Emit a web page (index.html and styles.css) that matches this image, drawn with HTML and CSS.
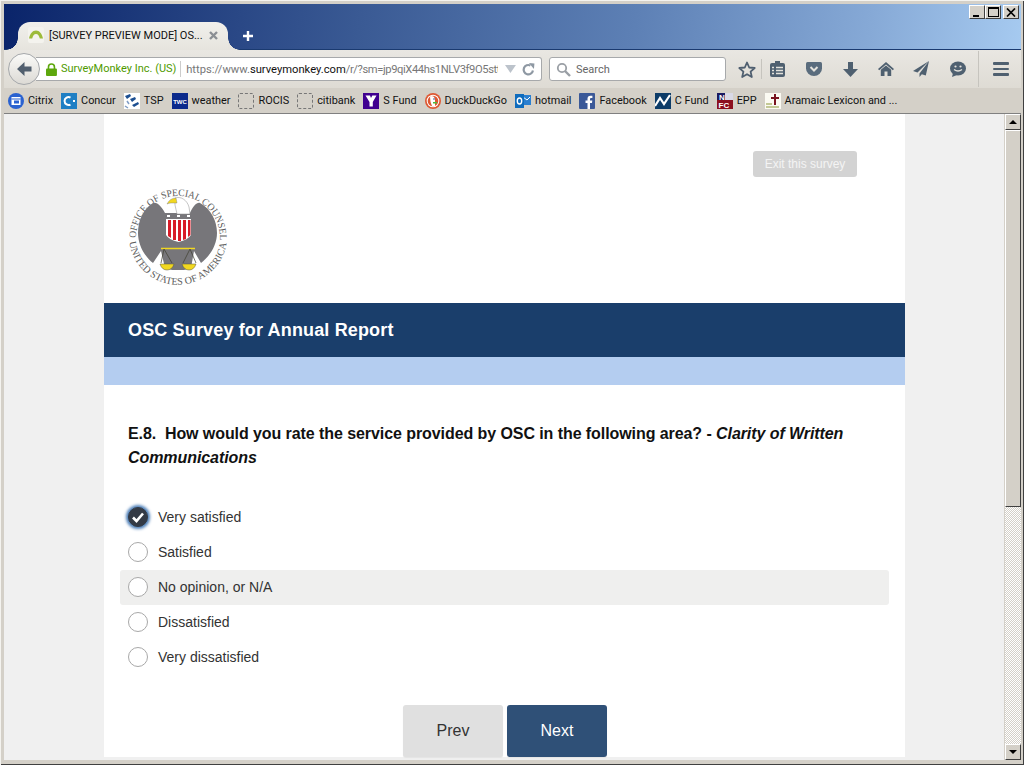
FILE: index.html
```html
<!DOCTYPE html>
<html lang="en">
<head>
    <meta charset="UTF-8">
    <meta name="viewport" content="width=device-width, initial-scale=1.0">
    <title>OSC Survey for Annual Report</title>
    <link rel="stylesheet" href="styles.css">
</head>
<body>
<div class="window">
    <div class="titlebar">
        <div class="tabs">
            <div class="tab">
                <svg class="tab-icon" width="16" height="16" viewBox="0 0 16 16"><rect width="16" height="16" rx="2" fill="#f4f3ee"/><path d="M1 11.500C2 6.500 4.500 3.500 8 3.500C11.500 3.500 14 6.500 15 11.500L11.800 11.500C11.200 8.800 10 7 8 7C6 7 4.800 8.800 4.200 11.500Z" fill="#9dbb3a"/></svg>
                <span class="tab-title">[SURVEY PREVIEW MODE] OS...</span>
                <svg class="tab-close" width="9" height="9" viewBox="0 0 9 9"><path d="M1 1L8 8M8 1L1 8" stroke="#8b8f94" stroke-width="2.400"/></svg>
            </div>
            <svg class="new-tab" width="12" height="12" viewBox="0 0 12 12"><path d="M6 1V11M1 6H11" stroke="#fff" stroke-width="2.400"/></svg>
        </div>
        <div class="win-buttons">
            <div class="win-btn"><span class="glyph-min"></span></div>
            <div class="win-btn"><span class="glyph-max"></span></div>
            <div class="win-btn close-btn">
                <svg width="10" height="9" viewBox="0 0 10 9"><path d="M1 0.500L9 8.500M9 0.500L1 8.500" stroke="#000" stroke-width="1.700"/></svg>
            </div>
        </div>
    </div>

    <div class="toolbar">
        <div class="back-btn">
            <svg width="16" height="16" viewBox="0 0 16 16"><path d="M8.500 1L1 8L8.500 15V10.500H15.500V5.500H8.500Z" fill="#515f6e"/></svg>
        </div>
        <div class="urlbar">
            <svg class="lock" width="11" height="13" viewBox="0 0 11 13"><path d="M2.500 6V4A3 3 0 0 1 8.500 4V6" fill="none" stroke="#5da70d" stroke-width="1.600"/><rect y="5.500" width="11" height="7.500" rx="1" fill="#5da70d"/></svg>
            <span class="identity">SurveyMonkey Inc. (US)</span>
            <span class="url"><span class="url-dim">https://www.</span>surveymonkey.com<span class="url-dim url-tail">/r/?sm=jp9qiX44hs1NLV3f9O5stt</span></span>
            <svg class="drop" width="11" height="8" viewBox="0 0 11 8"><path d="M0 0H11L5.500 8Z" fill="#bcc3cb"/></svg>
            <svg class="reload" width="13" height="13" viewBox="0 0 13 13"><path d="M11 7.500A4.700 4.700 0 1 1 8.500 2.500" fill="none" stroke="#8e98a3" stroke-width="2.200"/><path d="M7 0L12.500 0.500L12 6Z" fill="#8e98a3"/></svg>
        </div>
        <div class="searchbar">
            <svg width="15" height="15" viewBox="0 0 15 15"><circle cx="6" cy="6" r="4.200" fill="none" stroke="#9a9fa5" stroke-width="1.800"/><path d="M9 9L14 14" stroke="#9a9fa5" stroke-width="2.400"/></svg>
            <span>Search</span>
        </div>
        <div class="tool-icons">
            <svg class="tool-star" width="18" height="17" viewBox="0 0 18 17"><path d="M9 1.500L11.200 6.500L16.700 7L12.600 10.600L13.800 16L9 13.200L4.200 16L5.400 10.600L1.300 7L6.800 6.500Z" fill="none" stroke="#4f5f70" stroke-width="1.800" stroke-linejoin="round"/></svg>
            <span class="tool-sep"></span>
            <svg class="tool-list" width="15" height="16" viewBox="0 0 15 16"><rect y="2" width="15" height="14" rx="2" fill="#4f6070"/><rect x="5" y="0" width="5" height="4" fill="#4f6070"/><path d="M2 6.500H4M6 6.500H13M2 9.500H4M6 9.500H13M2 12.500H4M6 12.500H13" stroke="#e4e2dc" stroke-width="1.300"/></svg>
            <svg class="tool-pocket" width="16" height="14" viewBox="0 0 16 14"><path d="M0 1.500Q0 0 1.500 0H14.500Q16 0 16 1.500V6.500A8 7.500 0 0 1 0 6.500Z" fill="#5a6c7d"/><path d="M4.500 5L8 8.500L11.500 5" fill="none" stroke="#e4e2dc" stroke-width="2"/></svg>
            <svg class="tool-down" width="15" height="15" viewBox="0 0 15 15"><path d="M5 0H10V7H15L7.500 15L0 7H5Z" fill="#4f6070"/></svg>
            <svg class="tool-home" width="16" height="14" viewBox="0 0 16 14"><path d="M8 0L16 7L14.800 8.200L8 2.500L1.200 8.200L0 7Z" fill="#4f6070"/><path d="M2.800 7.800L8 3.500L13.200 7.800V14H9.500V9.500H6.500V14H2.800Z" fill="#4f6070"/></svg>
            <svg class="tool-send" width="16" height="16" viewBox="0 0 16 16"><path d="M16 0L0 10L4.500 11.500L16 0L6.500 12.500V16L8.800 13.200L12.800 14.500Z" fill="#4f6070"/></svg>
            <svg class="tool-chat" width="16" height="16" viewBox="0 0 16 16"><ellipse cx="8" cy="7.500" rx="8" ry="7" fill="#4f6070"/><path d="M3 12L2 16L7 14Z" fill="#4f6070"/><circle cx="5.500" cy="5.500" r="1.100" fill="#e4e2dc"/><circle cx="10.500" cy="5.500" r="1.100" fill="#e4e2dc"/><path d="M4 8.500Q8 11.500 12 8.500" fill="none" stroke="#e4e2dc" stroke-width="1.300"/></svg>
            <span class="tool-sep tall"></span>
            <div class="menu-btn"><span></span><span></span><span></span></div>
        </div>
    </div>

    <div class="bookmarks">
        <a class="bm"><svg width="16" height="16" viewBox="0 0 16 16"><circle cx="8" cy="8" r="8" fill="#2a62d0"/><rect x="3.500" y="4" width="9" height="8" fill="#fff"/><rect x="3.500" y="5.500" width="9" height="1" fill="#2a62d0"/><rect x="6" y="7.500" width="5" height="3" fill="#2a62d0"/></svg>Citrix</a>
        <a class="bm"><svg width="16" height="16" viewBox="0 0 16 16"><rect width="16" height="16" fill="#1f7fc4"/><path d="M9.500 4.500A4 4 0 1 0 9.500 11.500" fill="none" stroke="#fff" stroke-width="2"/><rect x="12" y="7" width="2" height="2" fill="#fff"/></svg>Concur</a>
        <a class="bm"><svg width="16" height="16" viewBox="0 0 16 16"><rect width="16" height="16" fill="#fff"/><path d="M1 3L6 1L7 3L3 6ZM6 6L11 4L12 6L8 9ZM8 12L14 9L15 11L10 14Z" fill="#1d4f91"/><path d="M3 8L5 11M1 13L4 15" stroke="#7f9cc5" stroke-width="1.500"/></svg>TSP</a>
        <a class="bm"><svg width="16" height="16" viewBox="0 0 16 16"><rect width="16" height="16" fill="#0c2a8c"/><text x="8" y="10.500" class="twc-text">TWC</text></svg>weather</a>
        <a class="bm"><span class="bm-empty"></span>ROCIS</a>
        <a class="bm"><span class="bm-empty"></span>citibank</a>
        <a class="bm"><svg width="16" height="16" viewBox="0 0 16 16"><rect width="16" height="16" fill="#400090"/><path d="M2.500 2.500H7L8 5L9.300 2.500H13.500L9.800 9V13.500H6.500V9Z" fill="#fff"/></svg>S Fund</a>
        <a class="bm"><svg width="16" height="16" viewBox="0 0 16 16"><circle cx="8" cy="8" r="8" fill="#de5833"/><circle cx="8" cy="8" r="6.300" fill="#fff"/><circle cx="8" cy="8" r="5.300" fill="#de5833"/><path d="M5 3.500Q9 2 10 6V13H7Q5 9 5 3.500Z" fill="#fff"/><path d="M8 9H12V10.500H8Z" fill="#4cba3c"/><circle cx="9" cy="6" r="0.800" fill="#2d4f8e"/></svg>DuckDuckGo</a>
        <a class="bm"><svg width="16" height="16" viewBox="0 0 16 16"><rect x="7" y="2" width="9" height="10" fill="#2a7fd0"/><path d="M8 4L12 7L15 4" fill="none" stroke="#fff"/><rect y="1" width="9" height="14" fill="#0f6cbd"/><ellipse cx="4.500" cy="8" rx="2.200" ry="3" fill="none" stroke="#fff" stroke-width="1.400"/></svg>hotmail</a>
        <a class="bm"><svg width="16" height="16" viewBox="0 0 16 16"><rect width="16" height="16" rx="1" fill="#3b5998"/><path d="M11 16V10H13L13.300 7.500H11V6Q11 5 12 5H13.400V2.700H11.500Q8.500 2.700 8.500 5.700V7.500H6.500V10H8.500V16Z" fill="#fff"/></svg>Facebook</a>
        <a class="bm"><svg width="16" height="16" viewBox="0 0 16 16"><rect width="16" height="16" fill="#0d3c68"/><path d="M0 13L5 5L9 11L15 2" fill="none" stroke="#fff" stroke-width="2.200"/></svg>C Fund</a>
        <a class="bm"><svg width="16" height="16" viewBox="0 0 16 16"><rect width="16" height="16" fill="#1a1a60"/><rect x="8" y="0" width="8" height="7" fill="#d9d9e6"/><rect y="7" width="16" height="9" fill="#8c0f1f"/><text x="2" y="6.500" class="nfc-text">N</text><text x="1.500" y="15" class="nfc-text">FC</text></svg>EPP</a>
        <a class="bm"><svg width="16" height="16" viewBox="0 0 16 16"><rect width="16" height="16" fill="#fbfaf2"/><path d="M9 1H11V4H14V6H11V12H9V6H6V4H9Z" fill="#7a1420"/><path d="M1 11H7M1 14H14" stroke="#c3c896" stroke-width="2"/></svg>Aramaic Lexicon and ...</a>
    </div>

    <div class="content">
        <div class="viewport">
            <div class="survey">
                <div class="survey-top">
                    <button class="exit-btn" type="button">Exit this survey</button>
                </div>
                <svg class="seal" width="102" height="102" viewBox="0 0 102 102">
                    <defs>
                        <path id="seal-top" d="M8 53A42 42 0 1 1 92 53"/>
                        <path id="seal-bottom" d="M1.400 57A49 49 0 0 0 98.600 57"/>
                    </defs>
                    <text class="seal-text"><textPath href="#seal-top" textLength="134" lengthAdjust="spacingAndGlyphs">OFFICE OF SPECIAL COUNSEL</textPath></text>
                    <text class="seal-text"><textPath href="#seal-bottom" textLength="140" lengthAdjust="spacingAndGlyphs">UNITED STATES OF AMERICA</textPath></text>
                    <path d="M37 28C33 20 28 17 25 18C15 24 10 36 10 48C10 60 17 72 25 78L33 66L37 83L44 85H56L63 83L66 66L73 78C82 71 89 60 89 48C89 36 83 24 72 18C69 17 65 21 62 28Z" fill="#77767a"/>
                    <path d="M47 13C53 11 59 15 61 22L62 29H49L47 20Z" fill="#fff" stroke="#8a8a8a" stroke-width="0.500"/>
                    <path d="M39 19Q42 13 48 13L49 18L43 18Q41 18 39 19Z" fill="#f2d820" stroke="#77767a" stroke-width="0.400"/>
                    <path d="M38 34H63V50Q60 55 50.500 57Q41 55 38 50Z" fill="#fff"/>
                    <path d="M40 35H43V53L40 51ZM45 35H48V55L45 55ZM50 35H53V56L50 56ZM55 35H58V54L55 55ZM60 35H62.500V50L60 52Z" fill="#d81c28"/>
                    <path d="M39 31H42M49 31H52M59 31H62" stroke="#fff" stroke-width="2"/>
                    <path d="M33 63.500H67" stroke="#f2d820" stroke-width="1.600"/>
                    <path d="M36 64L33 78M36 64L44 78M62 64L55 78M62 64L68 78" stroke="#3f3f30" stroke-width="0.700"/>
                    <path d="M32 79H46Q44 85 39 85Q34 85 32 79ZM54 79H68Q66 85 61 85Q56 85 54 79Z" fill="#f2d820" stroke="#56553d" stroke-width="0.500"/>
                </svg>
                <div class="banner">OSC Survey for Annual Report</div>
                <div class="sub-banner"></div>
                <div class="question">
                    E.8.&nbsp; How would you rate the service provided by OSC in the following area? - <em>Clarity of Written Communications</em>
                </div>
                <div class="options">
                    <div class="option">
                        <span class="radio checked">
                            <svg width="14" height="12" viewBox="0 0 14 12"><path d="M2 6.500L5.500 10L12 2.500" fill="none" stroke="#fff" stroke-width="2.600"/></svg>
                        </span>
                        Very satisfied
                    </div>
                    <div class="option"><span class="radio"></span>Satisfied</div>
                    <div class="option hover"><span class="radio"></span>No opinion, or N/A</div>
                    <div class="option"><span class="radio"></span>Dissatisfied</div>
                    <div class="option"><span class="radio"></span>Very dissatisfied</div>
                </div>
                <div class="nav-buttons">
                    <button class="nav-btn prev" type="button">Prev</button>
                    <button class="nav-btn next" type="button">Next</button>
                </div>
            </div>
        </div>
        <div class="scrollbar">
            <div class="sb-btn"><span class="arrow-up"></span></div>
            <div class="sb-thumb"></div>
            <div class="sb-track"></div>
            <div class="sb-btn"><span class="arrow-down"></span></div>
        </div>
    </div>
</div>
</body>
</html>
```

FILE: styles.css
```css
html, body {
    margin: 0;
    padding: 0;
    overflow: hidden;
}

.window {
    width: 1024px;
    height: 765px;
    box-sizing: border-box;
    padding: 4px 3px 5px 4px;
    display: flex;
    flex-direction: column;
    background-color: #d4d0c8;
    box-shadow: inset 1px 1px 0 #f4f3ef, inset -1px -1px 0 #404040;
    overflow: hidden;
    font-family: Roboto, sans-serif;
    font-size: 11px;
    color: #111;
}

/* title bar and tab strip */
.titlebar {
    height: 46px;
    flex-shrink: 0;
    display: flex;
    justify-content: space-between;
    align-items: flex-start;
    background: linear-gradient(97deg, #0a246a 0%, #3a5a94 35%, #5d80b5 62%, #86a9d6 85%, #a6caf0 100%);
    border-bottom: 1px solid #1a3a70;
    box-sizing: border-box;
}

.tabs {
    align-self: flex-end;
    display: flex;
    align-items: center;
    margin-left: 14px;
    margin-bottom: -1px;
}

.tab {
    position: relative;
    width: 210px;
    height: 28px;
    box-sizing: border-box;
    padding: 0 0 2px 10px;
    display: flex;
    align-items: center;
    background: linear-gradient(#f1f0ec, #e6e4de);
    border-radius: 12px 12px 0 0;
}

.tab::before,
.tab::after {
    content: "";
    position: absolute;
    bottom: 0;
    width: 12px;
    height: 12px;
    background: radial-gradient(circle at 0 0, transparent 11.500px, #e6e4de 12px);
}

.tab::before {
    left: -12px;
}

.tab::after {
    right: -12px;
    transform: scaleX(-1);
}

.tab-title {
    margin-left: 5px;
    width: 156px;
    white-space: nowrap;
    font-size: 11px;
    color: #111;
}

.tab-close {
    margin-left: 4px;
}

.new-tab {
    margin-left: 14px;
}

.win-buttons {
    display: flex;
    gap: 0;
    margin-top: 1px;
    margin-right: 2px;
}

.win-btn {
    width: 16px;
    height: 14px;
    box-sizing: border-box;
    display: flex;
    align-items: center;
    justify-content: center;
    background-color: #d4d0c8;
    border: 1px solid;
    border-color: #fff #404040 #404040 #fff;
}

.close-btn {
    margin-left: 2px;
}

.glyph-min {
    width: 6px;
    height: 2px;
    background-color: #000;
    margin-top: 7px;
    margin-right: 2px;
}

.glyph-max {
    width: 9px;
    height: 7px;
    border: 1px solid #000;
    border-top-width: 2px;
}

/* navigation toolbar */
.toolbar {
    height: 38px;
    flex-shrink: 0;
    display: flex;
    align-items: center;
    background: linear-gradient(#e9e7e2, #dedbd4);
    box-sizing: border-box;
}

.back-btn {
    width: 32px;
    height: 32px;
    box-sizing: border-box;
    margin-left: 4px;
    margin-right: -4px;
    border-radius: 50%;
    border: 1px solid #a5a8ab;
    background: linear-gradient(#fafaf8, #dcdad5);
    display: flex;
    align-items: center;
    justify-content: center;
    position: relative;
    z-index: 1;
}

.urlbar {
    width: 506px;
    height: 24px;
    box-sizing: border-box;
    padding: 0 6px 0 10px;
    display: flex;
    align-items: center;
    background-color: #fff;
    border: 1px solid #a7a9ab;
    border-left: none;
    border-radius: 0 3px 3px 0;
}

.identity {
    margin-left: 4px;
    width: 121px;
    box-sizing: border-box;
    border-right: 1px solid #ccc;
    line-height: 16px;
    white-space: nowrap;
    color: #4f9a00;
    font-size: 11px;
}

.url {
    margin-left: 5px;
    width: 314px;
    overflow: hidden;
    white-space: nowrap;
    font-size: 11.200px;
    color: #111;
}

.url-dim {
    color: #777;
}

.url-tail {
    letter-spacing: -0.400px;
}

.drop {
    margin-left: 7px;
}

.reload {
    margin-left: 6px;
}

.searchbar {
    width: 177px;
    height: 24px;
    box-sizing: border-box;
    margin-left: 7px;
    padding-left: 6px;
    display: flex;
    align-items: center;
    gap: 5px;
    background-color: #fff;
    border: 1px solid #a7a9ab;
    border-radius: 3px;
    color: #666;
}

.tool-icons {
    flex: 1;
    display: flex;
    align-items: center;
}

.tool-star {
    margin-left: 12px;
}

.tool-sep {
    width: 1px;
    height: 20px;
    margin-left: 5px;
    background-color: #c6c4be;
}

.tool-sep.tall {
    height: 36px;
    margin-left: 12px;
}

.tool-list {
    margin-left: 8px;
}

.tool-pocket {
    margin-left: 21px;
}

.tool-down {
    margin-left: 21px;
}

.tool-home {
    margin-left: 20px;
}

.tool-send {
    margin-left: 19px;
}

.tool-chat {
    margin-left: 21px;
}

.menu-btn {
    margin-left: 14px;
    width: 16px;
    display: flex;
    flex-direction: column;
    gap: 3px;
}

.menu-btn span {
    height: 2.500px;
    border-radius: 1px;
    background-color: #4f6070;
}

/* bookmarks bar */
.bookmarks {
    height: 26px;
    flex-shrink: 0;
    padding-left: 4px;
    display: flex;
    align-items: center;
    gap: 8px;
    background-color: #d4d0c8;
    border-bottom: 1px solid #808080;
    box-sizing: border-box;
    white-space: nowrap;
    font-size: 10.900px;
}

.bm {
    display: flex;
    align-items: center;
    gap: 4px;
    color: #111;
}

.bm-empty {
    width: 14px;
    height: 14px;
    border: 1px dashed #777;
    border-radius: 2px;
    display: block;
}

.twc-text {
    font-family: "Liberation Sans", sans-serif;
    font-size: 6px;
    font-weight: bold;
    fill: #fff;
    text-anchor: middle;
}

.nfc-text {
    font-family: "Liberation Sans", sans-serif;
    font-size: 8px;
    font-weight: bold;
    fill: #fff;
}

/* page area */
.content {
    flex: 1;
    min-height: 0;
    display: flex;
}

.viewport {
    flex: 1;
    min-width: 0;
    overflow: hidden;
    background-color: #f0f0f0;
}

.survey {
    width: 801px;
    margin-left: 100px;
    background-color: #fff;
    font-family: "Liberation Sans", Arial, sans-serif;
    color: #000;
}

.survey-top {
    display: flex;
    justify-content: flex-end;
    padding: 37px 48px 0 0;
}

.exit-btn {
    width: 104px;
    height: 26px;
    border: none;
    border-radius: 3px;
    background-color: #d3d3d3;
    color: #f4f4f4;
    font-family: inherit;
    font-size: 12px;
}

.seal {
    display: block;
    margin: 8px 0 16px 24px;
}

.seal-text {
    font-family: "Liberation Serif", serif;
    font-size: 10px;
    fill: #5c5c5c;
}

.banner {
    height: 54px;
    padding-left: 24px;
    display: flex;
    align-items: center;
    background-color: #1a3e6b;
    color: #fff;
    font-size: 18px;
    font-weight: bold;
    letter-spacing: 0.150px;
}

.sub-banner {
    height: 28px;
    background-color: #b4cdf0;
}

.question {
    padding: 37px 48px 0 24px;
    font-size: 16px;
    line-height: 24px;
    font-weight: bold;
    letter-spacing: -0.075px;
    color: #111;
}

.options {
    margin-top: 30px;
    padding: 0 16px;
}

.option {
    height: 35px;
    box-sizing: border-box;
    padding: 0 0 1px 8px;
    display: flex;
    align-items: center;
    gap: 10px;
    font-size: 14px;
    color: #333;
    border-radius: 3px;
}

.option.hover {
    background-color: #efefee;
}

.radio {
    width: 20px;
    height: 20px;
    box-sizing: border-box;
    display: flex;
    align-items: center;
    justify-content: center;
    border: 1px solid #a8a8a8;
    border-radius: 50%;
    background-color: #fff;
}

.radio.checked {
    background-color: #333a45;
    border-color: #333a45;
    box-shadow: 0 0 3px 2px #4d7fb8;
}

.nav-buttons {
    margin-top: 30px;
    display: flex;
    justify-content: center;
    gap: 4px;
    padding-left: 1px;
}

.nav-btn {
    width: 100px;
    height: 52px;
    border: none;
    border-radius: 3px;
    font-family: inherit;
    font-size: 16px;
    box-shadow: 0 1px 1px #e4e4e4;
}

.nav-btn.prev {
    background-color: #e0e0e0;
    color: #333;
}

.nav-btn.next {
    background-color: #2f5077;
    color: #fff;
}

/* scrollbar */
.scrollbar {
    width: 16px;
    display: flex;
    flex-direction: column;
    border-left: 1px solid #d4d0c8;
}

.sb-btn {
    height: 16px;
    flex-shrink: 0;
    box-sizing: border-box;
    display: flex;
    align-items: center;
    justify-content: center;
    background-color: #d4d0c8;
    border: 1px solid;
    border-color: #fff #404040 #404040 #fff;
}

.arrow-up {
    border: 4px solid transparent;
    border-top: none;
    border-bottom-color: #000;
}

.arrow-down {
    border: 4px solid transparent;
    border-bottom: none;
    border-top-color: #000;
}

.sb-thumb {
    height: 377px;
    flex-shrink: 0;
    box-sizing: border-box;
    background-color: #d4d0c8;
    border: 1px solid;
    border-color: #fff #404040 #404040 #fff;
}

.sb-track {
    flex: 1;
    background: repeating-conic-gradient(#d4d0c8 0 25%, #fff 0 50%) 0 0 / 2px 2px;
}
```
